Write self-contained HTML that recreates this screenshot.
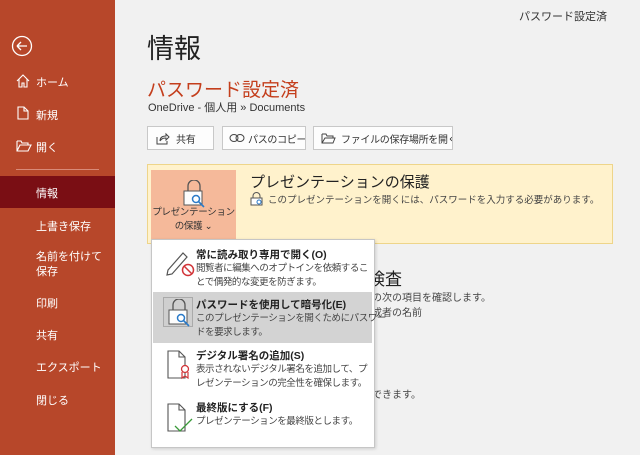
<!DOCTYPE html>
<html><head><meta charset="utf-8"><style>
*{margin:0;padding:0;box-sizing:border-box}
body{width:640px;height:455px;overflow:hidden;background:#f1f1f1;font-family:"Liberation Sans","Noto Sans CJK JP",sans-serif;position:relative;color:#333}
.a{position:absolute;white-space:nowrap}
#sb{position:absolute;left:0;top:0;width:115px;height:455px;background:#b7472a}
.nav{position:absolute;left:36px;color:#fff;font-size:11px}
.btn{position:absolute;top:126px;height:24px;background:#fdfdfd;border:1px solid #c8c8c8;font-size:10px;color:#333;display:flex;align-items:center;padding-left:8px;white-space:nowrap;letter-spacing:-0.3px;overflow:hidden}
.btn svg{flex-shrink:0}
.mi{position:absolute;left:153px;width:219px}
.t{position:absolute;font-size:10.5px;font-weight:bold;color:#222;white-space:nowrap}
.d{position:absolute;font-size:9.5px;color:#444;line-height:14px;white-space:nowrap;letter-spacing:-0.45px}
</style></head><body>
<div id="sb">
<svg class="a" style="left:11px;top:35px" width="22" height="22"><circle cx="11" cy="11" r="9.5" fill="none" stroke="#fff" stroke-width="1.3"/><path d="M6 11H16M6 11L10 7M6 11L10 15" fill="none" stroke="#fff" stroke-width="1.3"/></svg>
<svg class="a" style="left:16px;top:74px" width="14" height="14"><path d="M1 7L7 1L13 7M3 5V13H6V9H8V13H11V5" fill="none" stroke="#fff" stroke-width="1.1"/></svg>
<div class="nav" style="top:74px">ホーム</div>
<svg class="a" style="left:17px;top:106px" width="12" height="14"><path d="M1 1H7L11 5V13H1Z M7 1V5H11" fill="none" stroke="#fff" stroke-width="1.1"/></svg>
<div class="nav" style="top:107px">新規</div>
<svg class="a" style="left:16px;top:140px" width="16" height="12"><path d="M1 1H5L6 3H12V5 M1 1V11H12L15 5H4L1 11" fill="none" stroke="#fff" stroke-width="1.1"/></svg>
<div class="nav" style="top:139px">開く</div>
<div class="a" style="left:16px;top:169px;width:83px;height:1px;background:#d98a78"></div>
<div class="a" style="left:0;top:176px;width:115px;height:32px;background:#7a0e14"></div>
<div class="nav" style="top:185px">情報</div>
<div class="nav" style="top:218px">上書き保存</div>
<div class="nav" style="top:250px;line-height:15px;white-space:normal;width:66px">名前を付けて保存</div>
<div class="nav" style="top:295px">印刷</div>
<div class="nav" style="top:327px">共有</div>
<div class="nav" style="top:359px">エクスポート</div>
<div class="nav" style="top:392px">閉じる</div>
</div>
<div class="a" style="left:519px;top:8px;font-size:11px;color:#333">パスワード設定済</div>
<div class="a" style="left:147px;top:27px;font-size:27px;color:#222">情報</div>
<div class="a" style="left:147px;top:75px;font-size:19px;color:#c43e1c">パスワード設定済</div>
<div class="a" style="left:148px;top:99px;font-size:11px;color:#333">OneDrive - 個人用 » Documents</div>
<div class="btn" style="left:147px;width:67px"><svg width="14" height="13" style="margin-right:6px"><path d="M1 5V12H11V9 M4 9C4 5 7 4 10 4V2L13 5L10 8V6C8 6 6 6 4 9" fill="none" stroke="#444" stroke-width="1"/></svg>共有</div>
<div class="btn" style="left:222px;width:84px;padding-left:6px"><svg width="16" height="10" style="margin-right:3px"><ellipse cx="5" cy="5" rx="4" ry="3.5" fill="none" stroke="#444"/><ellipse cx="11" cy="5" rx="4" ry="3.5" fill="none" stroke="#444"/></svg>パスのコピー</div>
<div class="btn" style="left:313px;width:140px;padding-left:7px"><svg width="15" height="11" style="margin-right:5px"><path d="M1 1H5L6 3H12V5 M1 1V10H12L14 5H4L1 10" fill="none" stroke="#444"/></svg>ファイルの保存場所を開く</div>
<div class="a" style="left:147px;top:164px;width:466px;height:80px;background:#fff2cc;border:1px solid #eed58a"></div>
<div class="a" style="left:151px;top:170px;width:85px;height:74px;background:#f5b99a"></div>
<svg class="a" style="left:182px;top:180px" width="24" height="28"><path d="M6 11V6A6 6 0 0 1 18 6V11" fill="none" stroke="#555" stroke-width="1.3"/><rect x="2" y="11" width="18" height="14" fill="#fdfdfd" stroke="#555"/><circle cx="14" cy="19" r="3.5" fill="#fff" stroke="#2a7ac8" stroke-width="1.5"/><path d="M16 21L22 27" stroke="#2a7ac8" stroke-width="1.6"/></svg>
<div class="a" style="left:151px;top:206px;font-size:9.5px;color:#333;text-align:center;width:85px;line-height:14px;letter-spacing:-0.3px">プレゼンテーション<br>の保護 ⌄</div>
<div class="a" style="left:250px;top:171px;font-size:15px;color:#222">プレゼンテーションの保護</div>
<svg class="a" style="left:250px;top:192px" width="14" height="14"><path d="M3 6V4A3.5 3.5 0 0 1 10 4V6" fill="none" stroke="#555"/><rect x="1" y="6" width="11" height="7" fill="#fff" stroke="#555"/><circle cx="9" cy="10" r="2" fill="none" stroke="#2a7ac8"/></svg>
<div class="a" style="left:268px;top:192px;font-size:9.5px;color:#444">このプレゼンテーションを開くには、パスワードを入力する必要があります。</div>
<div class="a" style="left:368px;top:265px;font-size:17px;color:#222">検査</div>
<div class="a" style="left:372px;top:289px;font-size:10px;color:#444">の次の項目を確認します。</div>
<div class="a" style="left:372px;top:304px;font-size:10px;color:#444">成者の名前</div>
<div class="a" style="left:372px;top:386px;font-size:10px;color:#444">できます。</div>
<div class="a" style="left:151px;top:239px;width:224px;height:209px;background:#fff;border:1px solid #c6c6c6;box-shadow:1px 1px 3px rgba(0,0,0,.15)"></div>
<div class="mi" style="top:245px;height:46px">
<svg class="a" style="left:12px;top:3px" width="30" height="30"><path d="M3 22L18 5L22 9L7 26L2 27Z" fill="none" stroke="#555" stroke-width="1.2"/><circle cx="23" cy="22" r="5.5" fill="#fff" stroke="#d13438" stroke-width="1.5"/><path d="M19 18L27 26" stroke="#d13438" stroke-width="1.5"/></svg>
<div class="t" style="left:43px;top:2px">常に読み取り専用で開く(O)</div>
<div class="d" style="left:43px;top:17px">閲覧者に編集へのオプトインを依頼するこ<br>とで偶発的な変更を防ぎます。</div></div>
<div class="mi" style="top:292px;height:51px;background:#d3d3d3">
<div class="a" style="left:10px;top:5px;width:30px;height:30px;border:1px solid #aaa;background:#cfcfcf"></div>
<svg class="a" style="left:14px;top:7px" width="26" height="28"><path d="M6 11V6A6 6 0 0 1 18 6V11" fill="none" stroke="#555" stroke-width="1.3"/><rect x="2" y="11" width="18" height="14" fill="#fdfdfd" stroke="#555"/><circle cx="14" cy="19" r="3.5" fill="#fff" stroke="#2a7ac8" stroke-width="1.5"/><path d="M16 21L22 27" stroke="#2a7ac8" stroke-width="1.6"/></svg>
<div class="t" style="left:43px;top:5px">パスワードを使用して暗号化(E)</div>
<div class="d" style="left:43px;top:20px">このプレゼンテーションを開くためにパスワー<br>ドを要求します。</div></div>
<div class="mi" style="top:347px;height:50px">
<svg class="a" style="left:12px;top:2px" width="28" height="32"><path d="M3 2H14L20 8V29H3Z M14 2V8H20" fill="none" stroke="#555" stroke-width="1.1"/><circle cx="20" cy="20" r="3.5" fill="#fff" stroke="#d13438" stroke-width="1.3"/><path d="M17 23V29L20 27L23 29V23" fill="none" stroke="#d13438" stroke-width="1.2"/></svg>
<div class="t" style="left:43px;top:1px">デジタル署名の追加(S)</div>
<div class="d" style="left:43px;top:16px">表示されないデジタル署名を追加して、プ<br>レゼンテーションの完全性を確保します。</div></div>
<div class="mi" style="top:399px;height:34px">
<svg class="a" style="left:12px;top:3px" width="30" height="32"><path d="M3 2H14L20 8V29H3Z M14 2V8H20" fill="none" stroke="#555" stroke-width="1.1"/><path d="M10 24L15 29L27 17" fill="none" stroke="#3a9a3a" stroke-width="1.3"/></svg>
<div class="t" style="left:43px;top:1px">最終版にする(F)</div>
<div class="d" style="left:43px;top:16px">プレゼンテーションを最終版とします。</div></div>
</body></html>
